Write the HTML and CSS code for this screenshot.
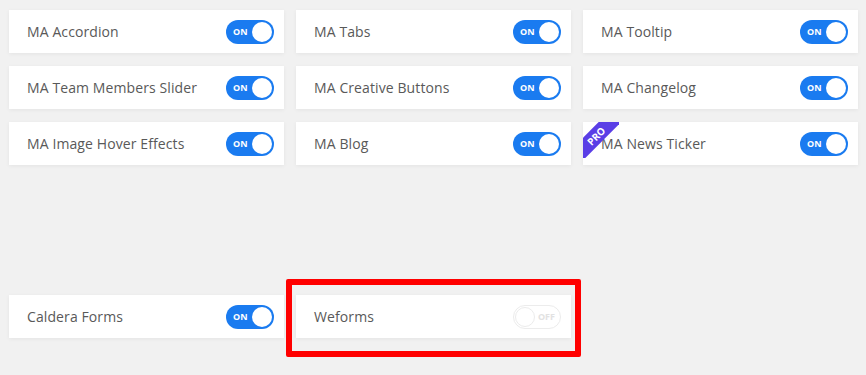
FILE: index.html
```html
<!DOCTYPE html>
<html lang="en">
<head>
    <meta charset="UTF-8">
    <meta name="viewport" content="width=device-width, initial-scale=1.0">
    <title>Elements</title>
    <link rel="stylesheet" href="styles.css">
</head>
<body>
    <div class="grid">
        <div class="card"><span class="label">MA Accordion</span><span class="toggle on">ON</span></div>
        <div class="card"><span class="label">MA Tabs</span><span class="toggle on">ON</span></div>
        <div class="card"><span class="label">MA Tooltip</span><span class="toggle on">ON</span></div>

        <div class="card"><span class="label">MA Team Members Slider</span><span class="toggle on">ON</span></div>
        <div class="card"><span class="label">MA Creative Buttons</span><span class="toggle on">ON</span></div>
        <div class="card"><span class="label">MA Changelog</span><span class="toggle on">ON</span></div>

        <div class="card"><span class="label">MA Image Hover Effects</span><span class="toggle on">ON</span></div>
        <div class="card"><span class="label">MA Blog</span><span class="toggle on">ON</span></div>
        <div class="card">
            <div class="ribbon"><span class="ribbon-band">PRO</span></div>
            <span class="label">MA News Ticker</span><span class="toggle on">ON</span>
        </div>
    </div>

    <div class="grid third-party">
        <div class="card"><span class="label">Caldera Forms</span><span class="toggle on">ON</span></div>
        <div class="card highlighted"><span class="label">Weforms</span><span class="toggle off">OFF</span></div>
    </div>
</body>
</html>
```

FILE: styles.css
```css
html {
    background: #f1f1f1;
}
body {
    margin: 0;
    padding: 10px 8px 0 9px;
    min-height: 375px;
    box-sizing: border-box;
    background: #f1f1f1;
    font-family: "Open Sans", "Noto Sans", sans-serif;
}
.grid {
    display: grid;
    grid-template-columns: repeat(3, 275px);
    column-gap: 12px;
    row-gap: 13px;
}
.third-party {
    margin-top: 130px;
}
.card {
    position: relative;
    height: 43px;
    background: #fff;
    box-shadow: 0 1px 4px rgba(0,0,0,0.06);
    display: flex;
    align-items: center;
    justify-content: space-between;
    padding: 0 10px 0 18px;
}
.label {
    font-size: 14px;
    color: #595959;
    letter-spacing: 0.1px;
}
.toggle {
    position: relative;
    width: 48px;
    height: 24px;
    border-radius: 12px;
    box-sizing: border-box;
    font-size: 9px;
    font-weight: 700;
    line-height: 24px;
}
.toggle.on {
    background: #1a7bf0;
    color: #fff;
    padding-left: 7px;
}
.toggle.on::after {
    content: "";
    position: absolute;
    right: 2px;
    top: 2px;
    width: 20px;
    height: 20px;
    border-radius: 50%;
    background: #fff;
}
.toggle.off {
    border: 1px solid #ececec;
    color: #e2e2e2;
    text-align: right;
    padding-right: 5px;
    line-height: 22px;
}
.toggle.off::before {
    content: "";
    position: absolute;
    left: 1px;
    top: 1px;
    width: 18px;
    height: 18px;
    border-radius: 50%;
    border: 1px solid #ececec;
    background: #fff;
}
.ribbon {
    position: absolute;
    left: 0;
    top: 0;
    width: 36px;
    height: 36px;
    overflow: hidden;
}
.ribbon-band {
    position: absolute;
    left: -17px;
    top: 6px;
    width: 60px;
    height: 16px;
    line-height: 16px;
    background: #5a3ee6;
    color: #fff;
    font-size: 10px;
    font-weight: 700;
    text-align: center;
    transform: rotate(-45deg);
}
.highlighted::after {
    content: "";
    position: absolute;
    left: -10px;
    right: -10px;
    top: -16px;
    bottom: -19px;
    border: 6px solid #ff0000;
    border-radius: 2px;
}
```
